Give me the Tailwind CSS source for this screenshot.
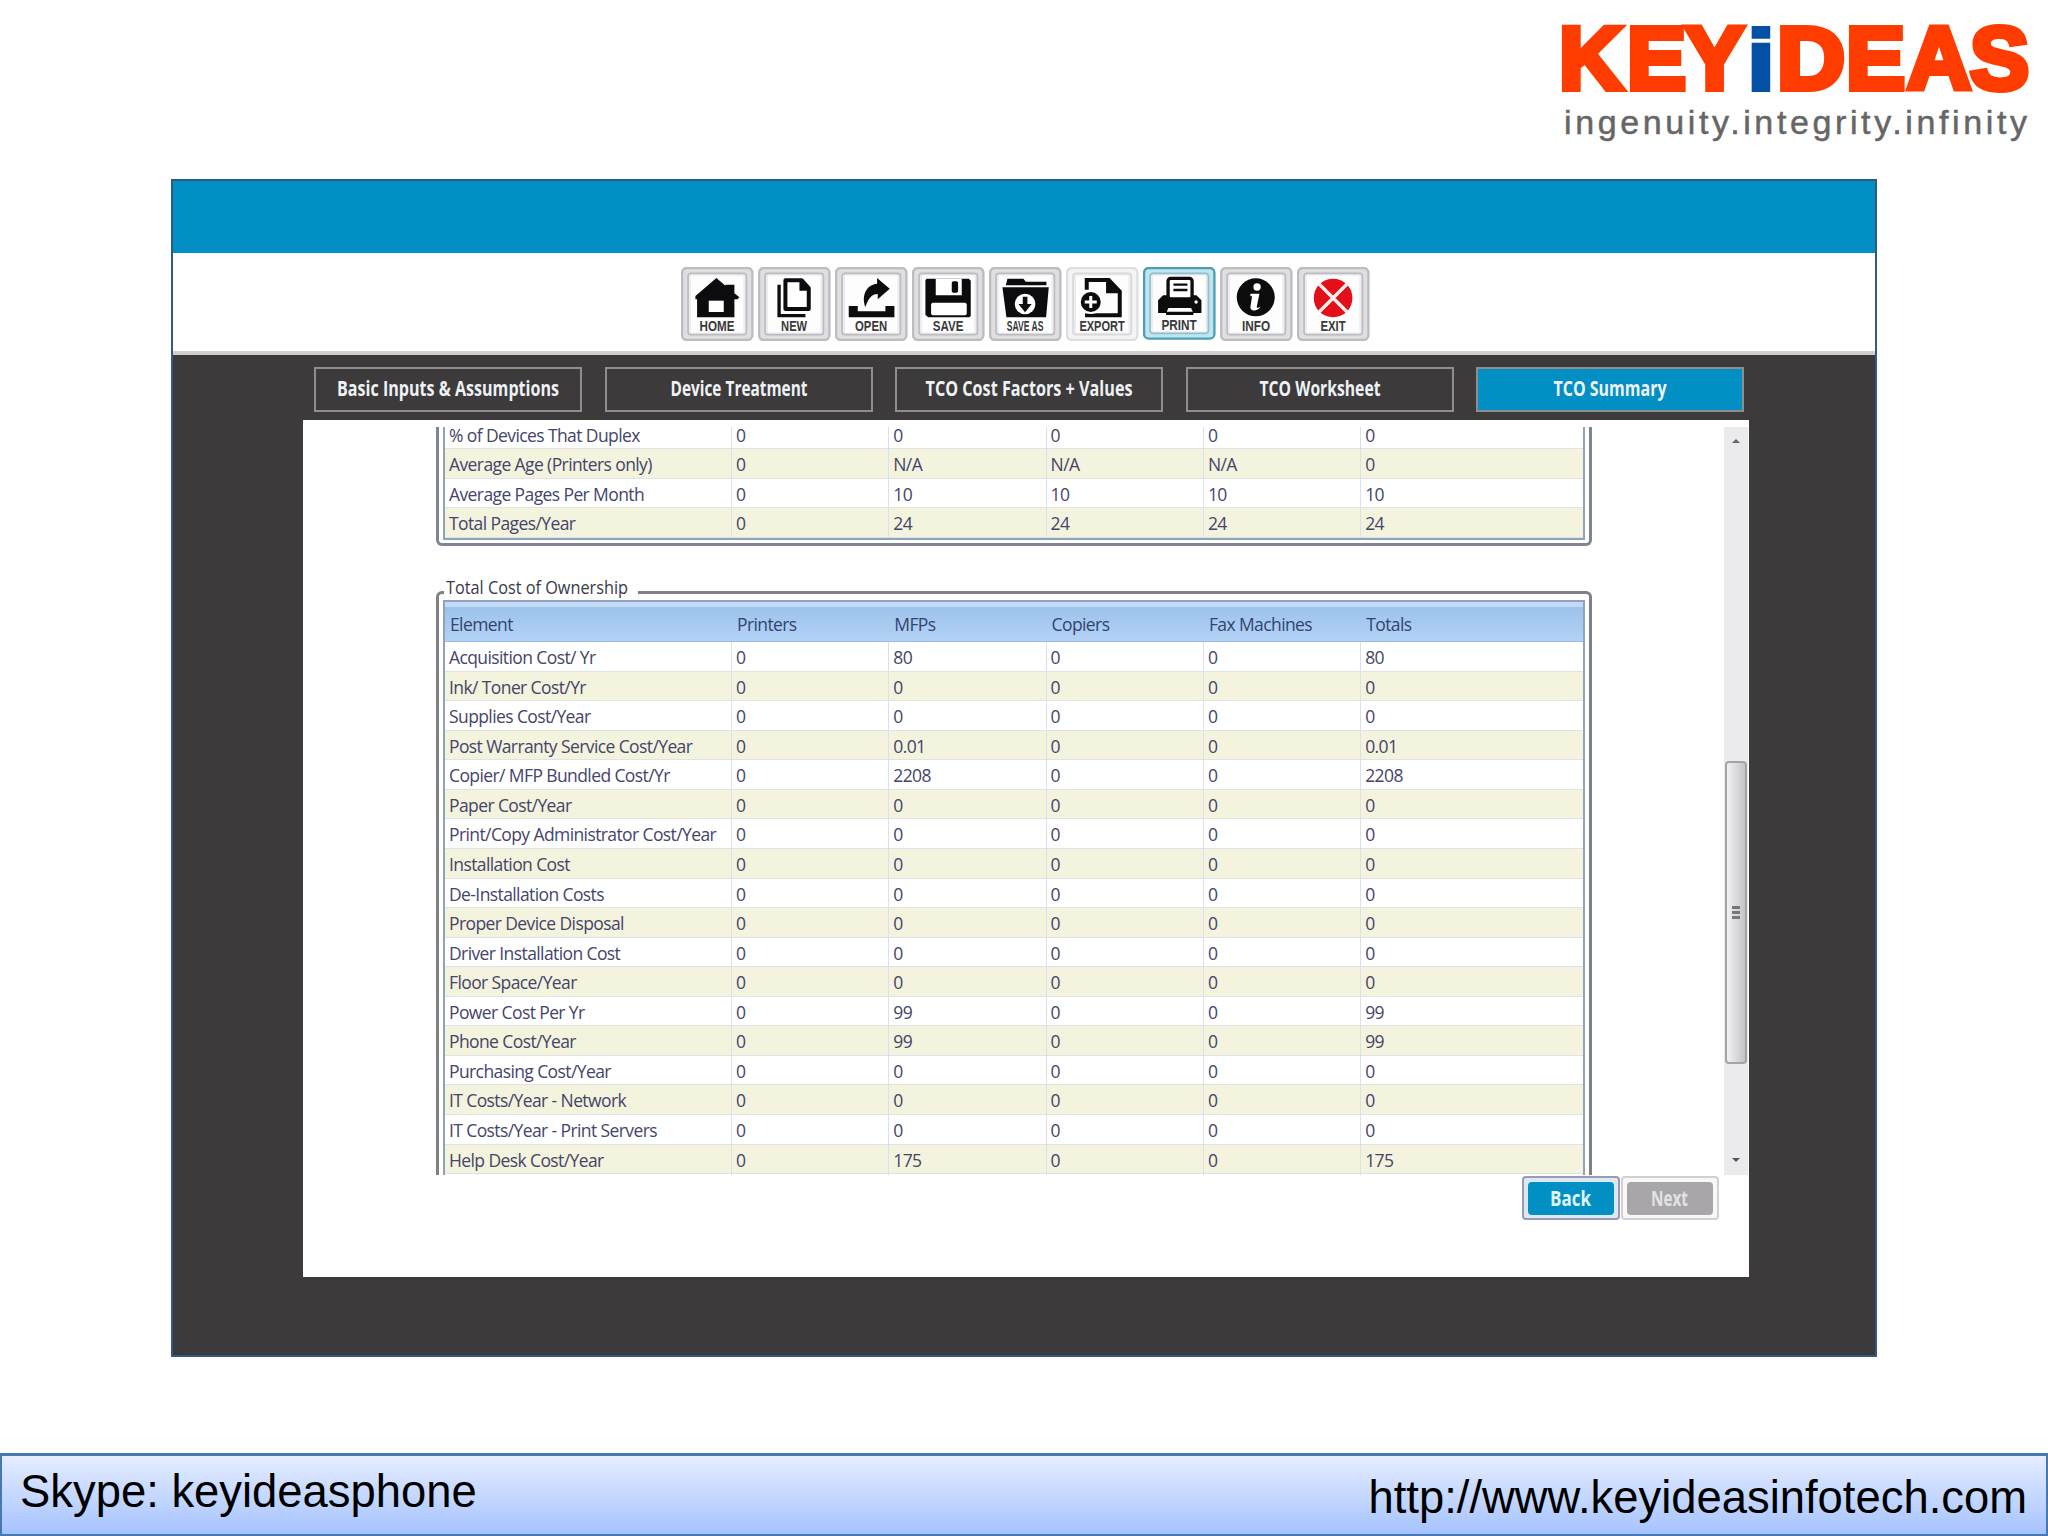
<!DOCTYPE html>
<html lang="en">
<head>
    <meta charset="UTF-8">
    <meta name="viewport" content="width=device-width, initial-scale=1.0">
    <title>TCO Summary - Keyideas</title>
    <script src="https://cdn.jsdelivr.net/npm/@tailwindcss/browser@4"></script>
</head>
<body class="bg-white">
    <div class="w-[2048px] h-[1536px] flex flex-col overflow-hidden bg-[#fefefe]">

        <!-- Logo -->
        <header class="h-[179px] flex justify-end">
            <svg class="w-[508px] h-[160px]" viewBox="1540 0 508 160">
                <g font-family="Liberation Sans" font-weight="bold" font-size="88.6" stroke-width="6" fill="#ff3c00" stroke="#ff3c00">
                    <text x="1559 1627 1685" y="89">KEY</text>
                    <text x="1747" y="90" font-size="86" fill="#0450a4" stroke="#0450a4" stroke-width="4" textLength="28" lengthAdjust="spacingAndGlyphs">i</text>
                    <text x="1777" y="89" textLength="68" lengthAdjust="spacingAndGlyphs">D</text>
                    <text x="1846 1907 1970" y="89">EAS</text>
                </g>
                <text x="1564" y="134" font-family="Liberation Sans" font-size="34" fill="#666" stroke="#666" stroke-width="0.5" textLength="463">ingenuity.integrity.infinity</text>
            </svg>
        </header>

        <!-- Application window -->
        <main class="ml-[171px] w-[1706px] h-[1178px] flex flex-col border-2 border-[#2d5a86] bg-[#3d3a3c]">
            <div class="h-[72px] bg-[#028fc3]"></div>

            <div id="toolbar" class="h-[102px] pt-[14px] pl-[508px] flex gap-[4.5px] bg-white border-b-4 border-[#d0d0d0]"></div>

            <nav id="tabs" class="mt-3 ml-[141px] flex gap-[22.6px]"></nav>

            <section class="mt-2 ml-[130px] w-[1446px] h-[857px] pt-[7px] bg-[#fefefe]">
                <div class="flex h-[748px]">
                    <div class="w-[1421px] pl-[133px] overflow-hidden font-['Open_Sans'] text-[17.5px] tracking-[-0.6px] text-[#45456a]">
                        <div class="w-[1156px] h-[119px] border-[3px] border-t-0 border-[#7f8596] rounded-b-md px-1 pb-[3px] bg-white">
                            <div class="h-full border-2 border-t-0 border-[#8fa3bd] overflow-hidden flex flex-col justify-end">
                                <div id="devices"></div>
                            </div>
                        </div>

                        <fieldset class="mt-[31px] w-[1156px] h-[640px] border-[3px] border-[#7f8083] rounded-md px-1">
                            <legend class="ml-[1px] pl-[2px] pr-2 h-[30px]">
                                <svg class="w-[184px] h-[28px]" viewBox="0 0 184 28"><text x="0" y="17" font-family="Open Sans" font-size="18" letter-spacing="0" fill="#3a3a48" textLength="182" lengthAdjust="spacingAndGlyphs">Total Cost of Ownership</text></svg>
                            </legend>
                            <div class="-mt-[7px] border-2 border-b-0 border-[#8fa3bd] h-[620px]">
                                <div class="h-[5px] bg-[#c3dbf6]"></div>
                                <div class="h-[35px] grid grid-cols-[288px_157.3px_157.3px_157.3px_157.3px_1fr] items-center bg-linear-to-b from-[#9cc2ea] to-[#b3d2f7] border-b border-[#9db9dc] text-[#34446f]">
                                    <div class="pl-[5px]">Element</div>
                                    <div class="pl-[4px]">Printers</div>
                                    <div class="pl-[4px]">MFPs</div>
                                    <div class="pl-[4px]">Copiers</div>
                                    <div class="pl-[4px]">Fax Machines</div>
                                    <div class="pl-[4px]">Totals</div>
                                </div>
                                <div id="costs"></div>
                            </div>
                        </fieldset>
                    </div>

                    <!-- Scrollbar -->
                    <div class="w-[24px] bg-[#ebeaec] flex flex-col items-center">
                        <div class="mt-[12px] border-x-4 border-x-transparent border-b-4 border-b-[#666]"></div>
                        <div class="mt-[318px] w-[22px] h-[303px] rounded-sm border-2 border-[#a4a3a7] bg-linear-to-r from-[#f2f2f3] to-[#c4c3c7] flex flex-col justify-center items-center gap-[2px]">
                            <i class="w-2 h-[3px] bg-[#777]"></i>
                            <i class="w-2 h-[3px] bg-[#777]"></i>
                            <i class="w-2 h-[3px] bg-[#777]"></i>
                        </div>
                        <div class="mt-[94px] border-x-4 border-x-transparent border-t-4 border-t-[#555]"></div>
                    </div>
                </div>

                <div class="mt-[1px] ml-[1219px] flex gap-[1px]">
                    <button class="w-[98px] h-[44px] rounded border-2 border-[#9b9bad] bg-[#dde8f5] flex justify-center items-center">
                        <svg class="w-[86px] h-[33px] rounded bg-[#028fc3]" viewBox="0 0 86 33"><text x="22" y="24" font-family="Open Sans" font-weight="bold" font-size="21" fill="#dff6ff" textLength="41" lengthAdjust="spacingAndGlyphs">Back</text></svg>
                    </button>
                    <button class="w-[98px] h-[44px] rounded border-2 border-[#d2d0d4] bg-[#f8f8f8] flex justify-center items-center">
                        <svg class="w-[86px] h-[33px] rounded bg-[#a8a6a9]" viewBox="0 0 86 33"><text x="24" y="24" font-family="Open Sans" font-weight="bold" font-size="21" fill="#e2e2e2" textLength="37" lengthAdjust="spacingAndGlyphs">Next</text></svg>
                    </button>
                </div>
            </section>
        </main>

        <footer class="mt-auto h-[83px] border-2 border-t-[3px] border-[#4678b4] bg-linear-to-b from-[#e6edff] to-[#a6c3fd] pl-[18px] pr-[19px] flex justify-between font-['Liberation_Sans'] text-[45.4px] leading-[52px] text-black">
            <span class="pt-[10px]">Skype: keyideasphone</span>
            <span class="pt-[16px]">http://www.keyideasinfotech.com</span>
        </footer>
    </div>

    <script>
        // Icons are drawn on a 216x222 grid, one per button
        const tools = [
            { name: 'HOME', w: 105, icon: '<path d="M43 87 106 33l27 23v-3h27v26l15 12-6 6h-9v54H48V97h-5z"/><path fill="#fff" d="M83 101h45v34H83z"/>' },
            { name: 'NEW', w: 78, icon: '<path d="M63 53v93h79" fill="none" stroke="#0c0c0e" stroke-width="10"/><path d="M82 40h49l21 23v63H82z" fill="#fff" stroke="#0c0c0e" stroke-width="12" stroke-linejoin="round"/><path d="M124 37v34h33z"/>' },
            { name: 'OPEN', w: 96, icon: '<path d="M41 117h27v16h83v-16h27v34H41z"/><path d="M126 33l38 32-36 32V81c-18 0-28 13-37 39-12-30 0-67 35-70z"/>' },
            { name: 'SAVE', w: 92, icon: '<path d="M44 35h126l6 6v106l-4 4H48l-8-8V39z"/><path fill="#fff" d="M71 35h78v50H71zM61 107h99l4 4v30l-4 4H61l-4-4v-30z"/><rect x="119" y="43" width="19" height="34" rx="5"/>' },
            { name: 'SAVE AS', w: 110, icon: '<path d="M55 35h48l7 9h62v11H50zM40 61h139l-8 90H52z"/><circle cx="108" cy="111" r="31" fill="#fff"/><path d="M101 89h14v22h13l-20 25-20-25h13z"/>' },
            { name: 'EXPORT', w: 136, icon: '<path d="M62 68V39h66l33 35v71H57" fill="none" stroke="#0c0c0e" stroke-width="12"/><path d="M120 33v46h47z"/><circle cx="74" cy="105" r="36" fill="#fff"/><circle cx="74" cy="105" r="30"/><path d="M74 87v36M56 105h36" stroke="#fff" stroke-width="9"/>' },
            { name: 'PRINT', w: 106, icon: '<path d="M60 89h100l15 15v38h-24v6H69v-6H45v-38z"/><rect x="75" y="38" width="72" height="62" rx="8" fill="#fff" stroke="#0c0c0e" stroke-width="10"/><path d="M91 57h42M91 73h42" stroke="#0c0c0e" stroke-width="7"/><path d="M76 127h68l5 11H71z" fill="#fff"/><circle cx="159" cy="109" r="5" fill="#fff"/>' },
            { name: 'INFO', w: 84, icon: '<circle cx="107" cy="91" r="57"/><circle cx="111" cy="60" r="11" fill="#fff"/><path d="M91 80h27l-8 40c0 4 6 3 11-1-4 11-31 18-30 1l5-32h-5z" fill="#fff"/>' },
            { name: 'EXIT', w: 76, icon: '<circle cx="108" cy="93" r="58" fill="#e3101b"/><path d="M66 51l84 84M150 51l-84 84" stroke="#fff0ec" stroke-width="10"/>' }
        ];

        const tabs = [
            { name: 'Basic Inputs &amp; Assumptions', w: 222 },
            { name: 'Device Treatment', w: 137 },
            { name: 'TCO Cost Factors + Values', w: 207 },
            { name: 'TCO Worksheet', w: 121 },
            { name: 'TCO Summary', w: 113, active: true }
        ];

        const devices = [
            ['% of Devices That Duplex', 0, 0, 0, 0, 0],
            ['Average Age (Printers only)', 0, 'N/A', 'N/A', 'N/A', 0],
            ['Average Pages Per Month', 0, 10, 10, 10, 10],
            ['Total Pages/Year', 0, 24, 24, 24, 24]
        ];

        const costs = [
            ['Acquisition Cost/ Yr', 0, 80, 0, 0, 80],
            ['Ink/ Toner Cost/Yr', 0, 0, 0, 0, 0],
            ['Supplies Cost/Year', 0, 0, 0, 0, 0],
            ['Post Warranty Service Cost/Year', 0, 0.01, 0, 0, 0.01],
            ['Copier/ MFP Bundled Cost/Yr', 0, 2208, 0, 0, 2208],
            ['Paper Cost/Year', 0, 0, 0, 0, 0],
            ['Print/Copy Administrator Cost/Year', 0, 0, 0, 0, 0],
            ['Installation Cost', 0, 0, 0, 0, 0],
            ['De-Installation Costs', 0, 0, 0, 0, 0],
            ['Proper Device Disposal', 0, 0, 0, 0, 0],
            ['Driver Installation Cost', 0, 0, 0, 0, 0],
            ['Floor Space/Year', 0, 0, 0, 0, 0],
            ['Power Cost Per Yr', 0, 99, 0, 0, 99],
            ['Phone Cost/Year', 0, 99, 0, 0, 99],
            ['Purchasing Cost/Year', 0, 0, 0, 0, 0],
            ['IT Costs/Year - Network', 0, 0, 0, 0, 0],
            ['IT Costs/Year - Print Servers', 0, 0, 0, 0, 0],
            ['Help Desk Cost/Year', 0, 175, 0, 0, 175]
        ];

        function toolButton(tool) {
            const on = tool.name === 'PRINT';
            const faint = tool.name === 'EXPORT';
            const edge = on ? '#4d9fb0' : faint ? '#dedde0' : '#bdbcc0';
            const fill = on ? '#bfe6f0' : faint ? '#f4f4f6' : '#dfdee2';
            const ring = on ? '#8fc0cc' : faint ? '#d8d7da' : '#bcbbbf';
            const lift = on ? -4 : 0;
            return `
                <svg class="w-[72.5px] h-[74px]" viewBox="0 0 217 222">
                    <rect x="3" y="3" width="211" height="${216 + lift}" rx="14" fill="${fill}" stroke="${edge}" stroke-width="7"/>
                    <rect x="21" y="19" width="175" height="${184 + lift}" rx="9" fill="#ededf0" stroke="${ring}" stroke-width="5"/>
                    <rect x="30" y="26" width="157" height="${171 + lift}" fill="#fdfdfe"/>
                    <g fill="#0c0c0e" transform="translate(0 ${lift})">${tool.icon}
                    <text x="${108 - tool.w / 2}" y="192" font-family="Liberation Sans" font-weight="bold" font-size="43" fill="#3a3a3a" textLength="${tool.w}" lengthAdjust="spacingAndGlyphs">${tool.name}</text></g>
                </svg>`;
        }

        function tabButton(tab) {
            const look = tab.active ? 'bg-[#028fc3]' : 'bg-transparent';
            return `
                <a class="w-[268px] h-[45px] border-2 border-[#8f8d8e] ${look}">
                    <svg class="w-[264px] h-[41px]" viewBox="0 0 264 41">
                        <text x="${132 - tab.w / 2}" y="26.5" font-family="Open Sans" font-weight="bold" font-size="21" fill="#eef2f4" textLength="${tab.w}" lengthAdjust="spacingAndGlyphs">${tab.name}</text>
                    </svg>
                </a>`;
        }

        function tableRow(row, i) {
            const bg = i % 2 ? 'bg-[#f3f3de]' : 'bg-white';
            return `
                <div class="h-[29.57px] grid grid-cols-[287px_157.3px_157.3px_157.3px_157.3px_1fr] ${bg} border-b border-[#dfe3e6] leading-[31px]">
                    ${row.map((cell, n) => n < 5
                        ? `<div class="h-full pl-1 border-r border-[#dcdfee] whitespace-nowrap">${cell}</div>`
                        : `<div class="h-full pl-1">${cell}</div>`).join('')}
                </div>`;
        }

        document.getElementById('toolbar').innerHTML = tools.map(toolButton).join('');
        document.getElementById('tabs').innerHTML = tabs.map(tabButton).join('');
        document.getElementById('devices').innerHTML = devices.map(tableRow).join('');
        document.getElementById('costs').innerHTML = costs.map(tableRow).join('');
    </script>
</body>
</html>
